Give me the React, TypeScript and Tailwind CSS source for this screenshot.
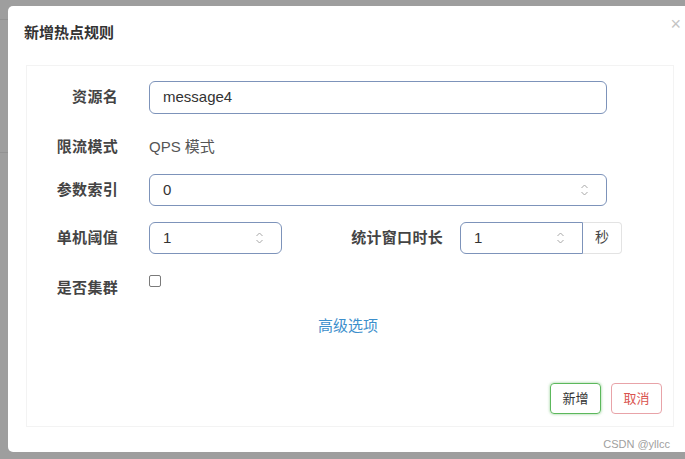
import React from "react";

const font = { fontFamily: '"Liberation Sans", "Noto Sans CJK SC", sans-serif' };

function Spinner() {
  return (
    <svg width="9" height="14" viewBox="0 0 9 14" className="shrink-0">
      <path d="M1.5 5 L4.5 2 L7.5 5" fill="none" stroke="#a8a8a8" strokeWidth="1" />
      <path d="M1.5 9 L4.5 12 L7.5 9" fill="none" stroke="#a8a8a8" strokeWidth="1" />
    </svg>
  );
}

function Label({ children, w = "w-[91px]" }: { children: React.ReactNode; w?: string }) {
  return (
    <div className={`${w} shrink-0 text-right text-[15px] font-bold tracking-[0.3px] text-[#444]`}>{children}</div>
  );
}

export default function App() {
  return (
    <div className="relative h-[459px] w-[685px] overflow-hidden bg-[#9e9e9e]" style={font}>
      {/* page behind the overlay */}
      <div className="h-[20px] border-b border-[#929292]" />
      <div className="h-[133px] border-b border-[#929292]" />

      <div className="absolute left-[8px] top-[6px] flex h-[446px] w-[690px] flex-col rounded-[5px] bg-white">
        <div className="flex h-[59px] items-start pl-[16px] pt-[16px]">
          <h3 className="text-[15px] font-bold text-[#333]">新增热点规则</h3>
          <span className="ml-auto mr-[17px] -mt-[7px] text-[18px] leading-none text-[#c4c4c4]">×</span>
        </div>

        <div className="ml-[18px] flex h-[362px] w-[648px] flex-col border border-[#f3f3f3]">
          <div className="mt-[15px] flex h-[33px] items-center">
            <Label>资源名</Label>
            <div className="ml-[31px] flex h-full w-[458px] items-center rounded-[6px] border border-[#7d93ba] px-[13px] text-[15px] text-[#333]">
              message4
            </div>
          </div>

          <div className="mt-[17px] flex h-[33px] items-center">
            <Label>限流模式</Label>
            <div className="ml-[31px] text-[15px] text-[#555]">QPS 模式</div>
          </div>

          <div className="mt-[10px] flex h-[32px] items-center">
            <Label>参数索引</Label>
            <div className="ml-[31px] flex h-full w-[458px] items-center rounded-[6px] border border-[#7d93ba] pl-[13px] pr-[17px] text-[15px] text-[#333]">
              <span>0</span>
              <span className="ml-auto">
                <Spinner />
              </span>
            </div>
          </div>

          <div className="mt-[16px] flex h-[32px] items-center">
            <Label>单机阈值</Label>
            <div className="ml-[31px] flex h-full w-[133px] items-center rounded-[6px] border border-[#7d93ba] pl-[13px] pr-[17px] text-[15px] text-[#333]">
              <span>1</span>
              <span className="ml-auto">
                <Spinner />
              </span>
            </div>
            <Label w="w-[161px]">统计窗口时长</Label>
            <div className="ml-[17px] flex h-full">
              <div className="flex h-full w-[123px] items-center rounded-l-[6px] border border-[#7d93ba] pl-[13px] pr-[17px] text-[15px] text-[#333]">
                <span>1</span>
                <span className="ml-auto">
                  <Spinner />
                </span>
              </div>
              <div className="flex h-full w-[39px] items-center justify-center rounded-r-[4px] border border-l-0 border-[#e3e3e3] text-[14px] text-[#444]">
                秒
              </div>
            </div>
          </div>

          <div className="mt-[16px] flex h-[36px] items-center">
            <Label>是否集群</Label>
            <div className="ml-[31px] -mt-[13px] h-[12px] w-[12px] rounded-[2px] border border-[#7a7a7a]" />
          </div>

          <div className="mt-[10px] flex h-[20px] items-center justify-center pr-[4px] text-[15px] text-[#3d8fcc]">
            高级选项
          </div>

          <div className="mt-[47px] flex justify-end gap-[10px] pr-[11px]">
            <button className="h-[31px] w-[51px] rounded-[4px] border border-[#5cb85c] text-[13px] text-[#333] shadow-[0_0_3px_rgba(92,184,92,0.7)]">
              新增
            </button>
            <button className="h-[31px] w-[51px] rounded-[4px] border border-[#e8a3a8] text-[13px] text-[#d9534f]">
              取消
            </button>
          </div>
        </div>

        <div className="mt-[9px] pr-[28px] text-right text-[11px] text-[#a0a0a0]">CSDN @yllcc</div>
      </div>
    </div>
  );
}
